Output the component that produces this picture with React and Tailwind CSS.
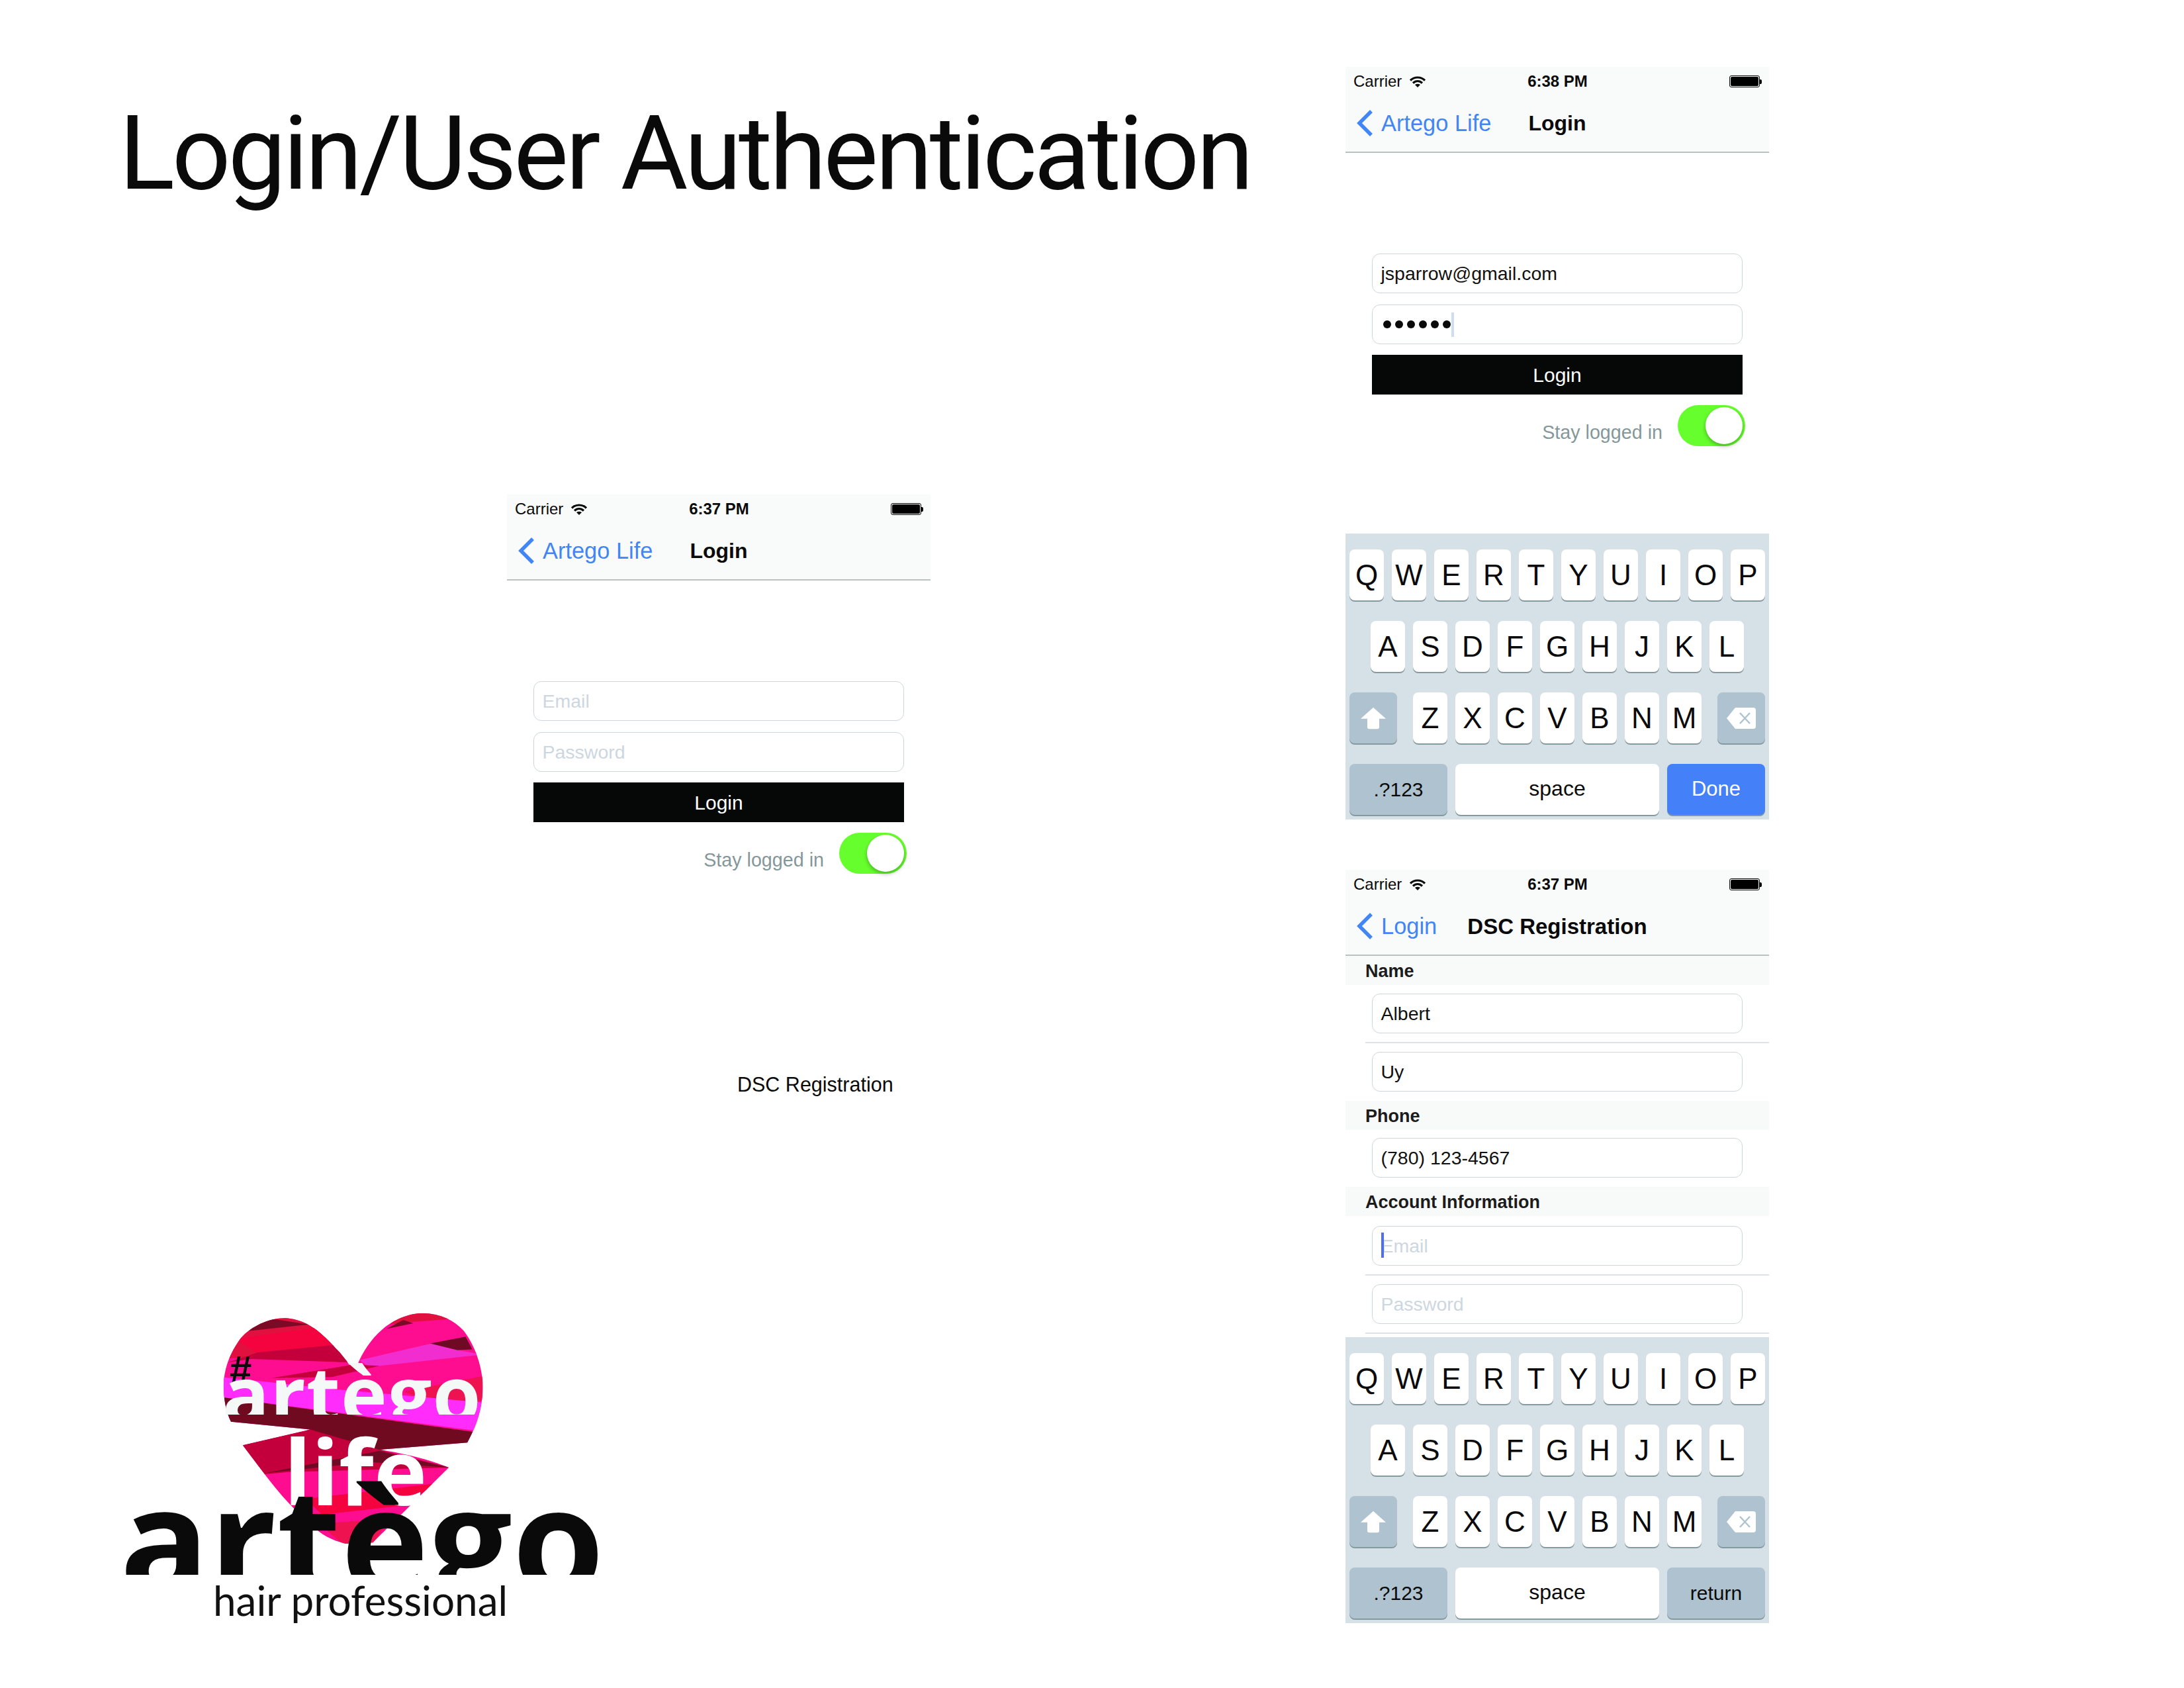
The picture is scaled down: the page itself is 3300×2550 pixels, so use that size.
import React from 'react';

const HEART =
  'M765 330 C775 290 800 220 840 170 C880 120 925 100 960 100 C1010 102 1050 130 1080 180 C1110 240 1130 320 1135 400 C1138 480 1130 570 1090 678 L830 710 C900 725 980 755 1035 790 L810 1125 L730 1130 C700 1120 670 1100 650 1075 C590 1000 540 920 495 830 L425 690 L625 620 L390 585 C375 540 368 480 368 420 C370 340 390 270 420 210 C450 160 500 122 550 122 C600 125 640 165 670 210 C700 255 725 295 740 330 Z';

const STRIPES = [
  ['#ff0d90', '300,60 1200,60 1200,1200 300,1200'],
  ['#e0103f', '360,100 700,100 720,300 360,300'],
  ['#7a0a26', '440,180 490,120 620,150'],
  ['#f5033f', '400,215 640,165 710,250 465,275'],
  ['#c4003c', '380,320 470,275 710,240 745,320 450,305'],
  ['#e0103f', '860,150 900,100 1030,100 1050,125 920,140'],
  ['#7a0a26', '850,170 900,130 930,145'],
  ['#f22dcf', '770,310 985,235 1060,265 1135,285 800,340'],
  ['#6f0a24', '980,235 1085,205 1105,262 1060,265'],
  ['#c4003c', '510,390 750,330 830,335 690,385'],
  ['#ee1250', '900,450 1140,380 1140,490 990,500'],
  ['#ff2cfc', '360,385 700,440 1140,500 1140,630 360,475'],
  ['#700a20', '360,475 1115,632 1095,690 830,715 625,625 380,590'],
  ['#c4003c', '420,690 625,620 830,710 1040,790 560,810 490,820'],
  ['#6f0a24', '490,815 830,715 1035,790 800,765'],
  ['#f5033f', '610,930 1000,860 900,960 660,1000'],
  ['#ee1250', '650,1040 860,1020 810,1130 720,1130'],
];

function Logo() {
  return (
    <div className="relative w-[800px] h-[530px] overflow-hidden ml-[150px]">
      <svg className="absolute inset-0 w-[800px] h-[530px]" viewBox="0 0 1568 1568" preserveAspectRatio="none">
        <defs>
          <clipPath id="heartClip">
            <path d={HEART} />
          </clipPath>
        </defs>
        <g clipPath="url(#heartClip)">
          {STRIPES.map(([color, points], i) => (
            <polygon key={i} fill={color} points={points} />
          ))}
        </g>
      </svg>
      <div className="absolute left-[197px] top-[90px] text-[60px] leading-[60px] font-bold text-[#0a0a0a] font-['Liberation_Sans',sans-serif]">#</div>
      <div className="absolute left-[186px] top-[88px] w-[400px] h-[99px] overflow-hidden text-[118px] leading-[134px] font-bold tracking-[1px] text-[#f4f8f6] font-['Open_Sans',sans-serif]">artègo</div>
      <div className="absolute left-[279px] top-[197px] text-[136px] leading-[150px] font-bold text-white font-['Open_Sans',sans-serif]">life</div>
      <div className="absolute left-[31px] top-[249px] w-[730px] h-[180px] overflow-hidden text-[224px] leading-[250px] font-bold text-[#0a0a0a] font-['Open_Sans',sans-serif]">artègo</div>
      <div className="absolute left-[172px] top-[431px] text-[62px] leading-[72px] text-[#111] font-['Lato',sans-serif]">hair professional</div>
    </div>
  );
}

function Wifi() {
  return (
    <svg width="24" height="17" viewBox="0 0 24 17" fill="none" stroke="#0a0a0a" strokeWidth="3.2">
      <path d="M1 6.5 C7 0.5 17 0.5 23 6.5" />
      <path d="M5 10.5 C9 6.5 15 6.5 19 10.5" />
      <path d="M12 17 L8 13 C10.5 11.2 13.5 11.2 16 13 Z" fill="#0a0a0a" stroke="none" />
    </svg>
  );
}

function Battery() {
  return (
    <div className="flex items-center">
      <div className="w-[46px] h-[18px] rounded-[3px] border border-black p-px">
        <div className="w-full h-full rounded-[2px] bg-black"></div>
      </div>
      <div className="w-[3px] h-[7px] bg-black rounded-r-[2px]"></div>
    </div>
  );
}

function Chevron() {
  return (
    <svg width="26" height="40" viewBox="0 0 26 40" fill="none" stroke="#4285f4" strokeWidth="5.5">
      <path d="M23 2 L5 20 L23 38" />
    </svg>
  );
}

function NavBars({ time, back, title, titleSize = 'text-[32px]' }) {
  return (
    <div className="bg-[#f9fbfb]">
      <div className="h-[42px] pt-[2px] grid grid-cols-[1fr_auto_1fr] items-center pl-3 pr-[11px] text-[24px] leading-none text-[#0a0a0a]">
        <div className="flex items-center gap-3">
          <span>Carrier</span>
          <Wifi />
        </div>
        <div className="font-bold">{time}</div>
        <div className="flex justify-end">
          <Battery />
        </div>
      </div>
      <div className="h-[88px] grid grid-cols-[1fr_auto_1fr] items-center border-b-2 border-[#b9c1c1]">
        <div className="flex items-center pl-[16px] gap-[12px] text-[34.4px] leading-none text-[#4285f4]">
          <Chevron />
          <span>{back}</span>
        </div>
        <div className={`${titleSize} leading-none font-bold text-[#0a0a0a]`}>{title}</div>
        <div></div>
      </div>
    </div>
  );
}

function Field({ children, placeholder, caret }) {
  return (
    <div className="relative w-[560px] h-[60px] ml-[40px] pl-[12.5px] flex items-center rounded-[12px] border-[1.5px] border-[#cdd6da] text-[28.5px] leading-none text-[#111]">
      {placeholder ? <span className="text-[#cdd7df]">{placeholder}</span> : children}
      {caret && <span className="absolute left-[13px] top-[9px] w-[4px] h-[38px] bg-[#4f6ff0]"></span>}
    </div>
  );
}

function PasswordDots() {
  return (
    <div className="flex items-center gap-[6px] pl-[3px]">
      {[0, 1, 2, 3, 4, 5].map((i) => (
        <span key={i} className="w-[12px] h-[12px] rounded-full bg-[#0a0a0a]"></span>
      ))}
      <span className="w-[4px] h-[37px] -ml-[5px] bg-[#cfdcf5]"></span>
    </div>
  );
}

function LoginForm({ email, filled }) {
  return (
    <div className="pt-[152px]">
      <Field placeholder={email ? null : 'Email'}>{email}</Field>
      <div className="mt-[17px]">
        <Field placeholder={filled ? null : 'Password'}>
          <PasswordDots />
        </Field>
      </div>
      <div className="mt-[16px] ml-[40px] w-[560px] h-[60px] pt-[1px] bg-[#050807] flex items-center justify-center text-white text-[30px] leading-none">
        Login
      </div>
      <div className="mt-[16px] flex items-center justify-end pr-[36px] gap-[23px]">
        <span className="mt-[20px] text-[28.7px] leading-none text-[#84979a]">Stay logged in</span>
        <div className="w-[102px] h-[62px] rounded-full bg-[#66ff2d] flex items-center justify-end pr-[4px]">
          <div className="w-[56px] h-[56px] rounded-full bg-white shadow-[0_3px_6px_rgba(0,0,0,0.3)]"></div>
        </div>
      </div>
    </div>
  );
}

function Key({ children, className = 'w-[52px] bg-white text-[44px] text-[#0a0a0a]' }) {
  return (
    <div className={`h-[77px] rounded-[8px] shadow-[0_2px_0_#849a9f] flex items-center justify-center leading-none ${className}`}>
      {children}
    </div>
  );
}

function ShiftIcon() {
  return (
    <svg width="40" height="34" viewBox="0 0 40 42" preserveAspectRatio="none" fill="white">
      <path d="M20 1 L39 22 L29 22 L29 38 Q29 41 26 41 L14 41 Q11 41 11 38 L11 22 L1 22 Z" />
    </svg>
  );
}

function BackspaceIcon() {
  return (
    <svg width="46" height="34" viewBox="0 0 46 34">
      <path d="M14 1 L41 1 Q45 1 45 5 L45 29 Q45 33 41 33 L14 33 L1 17 Z" fill="white" />
      <path d="M21 9 L36 25 M36 9 L21 25" stroke="#aec2cf" strokeWidth="2.4" fill="none" />
    </svg>
  );
}

function Keyboard({ action }) {
  const special = 'bg-[#aec2cf] text-[#0a0a0a]';
  return (
    <div className="h-[432px] bg-[#d5e1e7] pt-[24px] px-[6px] flex flex-col gap-[31px]">
      <div className="flex gap-[12px]">
        {'QWERTYUIOP'.split('').map((k) => (
          <Key key={k}>{k}</Key>
        ))}
      </div>
      <div className="flex gap-[12px] justify-center">
        {'ASDFGHJKL'.split('').map((k) => (
          <Key key={k}>{k}</Key>
        ))}
      </div>
      <div className="flex justify-between">
        <Key className={`w-[72px] ${special}`}>
          <ShiftIcon />
        </Key>
        <div className="flex gap-[12px]">
          {'ZXCVBNM'.split('').map((k) => (
            <Key key={k}>{k}</Key>
          ))}
        </div>
        <Key className={`w-[72px] ${special}`}>
          <BackspaceIcon />
        </Key>
      </div>
      <div className="flex gap-[12px]">
        <Key className={`w-[148px] text-[30px] ${special}`}>.?123</Key>
        <Key className="w-[308px] pb-[3px] bg-white text-[32px] text-[#0a0a0a]">space</Key>
        {action === 'Done' ? (
          <Key className="w-[148px] pb-[2px] bg-[#4480f8] text-[31px] text-white">Done</Key>
        ) : (
          <Key className={`w-[148px] text-[30px] ${special}`}>return</Key>
        )}
      </div>
    </div>
  );
}

function SectionBar({ children, className = '' }) {
  return (
    <div className={`h-[44px] pt-[3px] pl-[30px] flex items-center bg-[#f8fafa] text-[27px] leading-none font-bold text-[#1c1c1c] ${className}`}>
      {children}
    </div>
  );
}

function Divider() {
  return <div className="ml-[30px] h-[2px] bg-[#dbe3e6]"></div>;
}

function RegistrationForm() {
  return (
    <div>
      <SectionBar>Name</SectionBar>
      <div className="pt-[13px]">
        <Field>Albert</Field>
      </div>
      <div className="mt-[13px]"><Divider /></div>
      <div className="mt-[13px]">
        <Field>Uy</Field>
      </div>
      <SectionBar className="mt-[14px]">Phone</SectionBar>
      <div className="pt-[12px]">
        <Field>(780) 123-4567</Field>
      </div>
      <SectionBar className="mt-[14px]">Account Information</SectionBar>
      <div className="pt-[15px]">
        <Field placeholder="Email" caret />
      </div>
      <div className="mt-[13px]"><Divider /></div>
      <div className="mt-[13px]">
        <Field placeholder="Password" />
      </div>
      <div className="mt-[13px]"><Divider /></div>
    </div>
  );
}

export default function App() {
  return (
    <div className="w-[3300px] h-[2550px] bg-white flex items-start font-['Liberation_Sans',sans-serif]">
      {/* Left part of the sheet: title, login screen, logo */}
      <div className="w-[2033px] shrink-0 flex flex-col">
        <h1 className="mt-[154px] ml-[180px] h-[156px] whitespace-nowrap text-[156px] leading-[156px] tracking-[-4.3px] text-[#0a0a0a] font-['Roboto',sans-serif] font-normal">
          Login/User Authentication
        </h1>
        <div className="mt-[437px] ml-[766px] w-[640px]">
          <NavBars time="6:37 PM" back="Artego Life" title="Login" />
          <LoginForm />
        </div>
        <div className="mt-[300px] ml-[1114px] text-[30.5px] leading-[36px] text-[#0a0a0a]">DSC Registration</div>
        <div className="mt-[294px]">
          <Logo />
        </div>
      </div>

      {/* Right column: filled login with keyboard, registration with keyboard */}
      <div className="w-[640px] shrink-0 pt-[101px]">
        <NavBars time="6:38 PM" back="Artego Life" title="Login" />
        <LoginForm email="jsparrow@gmail.com" filled />
        <div className="mt-[132px]">
          <Keyboard action="Done" />
        </div>
        <div className="mt-[76px]">
          <NavBars time="6:37 PM" back="Login" title="DSC Registration" titleSize="text-[33px]" />
          <RegistrationForm />
          <div className="mt-[5px]">
            <Keyboard action="return" />
          </div>
        </div>
      </div>
    </div>
  );
}
